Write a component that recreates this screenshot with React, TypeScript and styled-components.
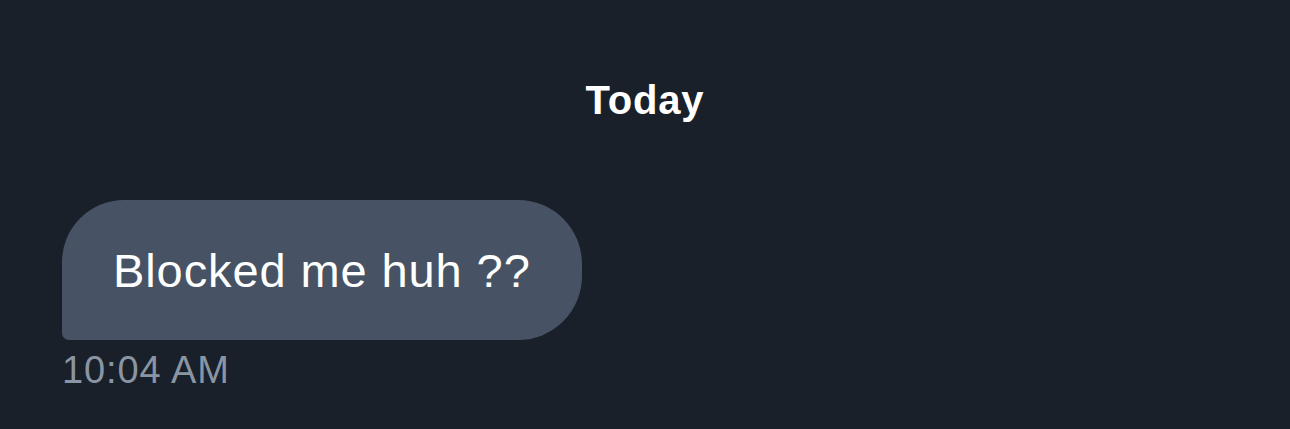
import React from "react";
import styled, { createGlobalStyle } from "styled-components";

const Global = createGlobalStyle`
  html, body {
    margin: 0;
    padding: 0;
    background: #19202a;
  }
  body {
    font-family: "Liberation Sans", Arial, sans-serif;
    -webkit-font-smoothing: antialiased;
  }
`;

const Thread = styled.main`
  width: 1290px;
  height: 429px;
  box-sizing: border-box;
  background: #19202a;
  padding: 73px 0 0 62px;
  display: flex;
  flex-direction: column;
  overflow: hidden;
`;

const DayLabel = styled.div`
  align-self: stretch;
  margin-left: -62px;
  text-align: center;
  color: #ffffff;
  font-weight: 700;
  font-size: 40px;
  line-height: 54px;
  letter-spacing: 0.8px;
`;

const Message = styled.div`
  margin-top: 73px;
  display: flex;
  flex-direction: column;
  align-items: flex-start;
`;

const Bubble = styled.div`
  box-sizing: border-box;
  height: 140px;
  display: flex;
  align-items: center;
  padding: 0 51px 0 51px;
  background: #475364;
  color: #ffffff;
  font-size: 47px;
  letter-spacing: 0.9px;
  border-radius: 62px 64px 64px 7px;
`;

const Time = styled.div`
  margin-top: 8px;
  color: #8a95a3;
  font-size: 38px;
  line-height: 44px;
  letter-spacing: 0.9px;
`;

export default function App() {
  return (
    <>
      <Global />
      <Thread>
        <DayLabel>Today</DayLabel>
        <Message>
          <Bubble>Blocked me huh ??</Bubble>
          <Time>10:04 AM</Time>
        </Message>
      </Thread>
    </>
  );
}
